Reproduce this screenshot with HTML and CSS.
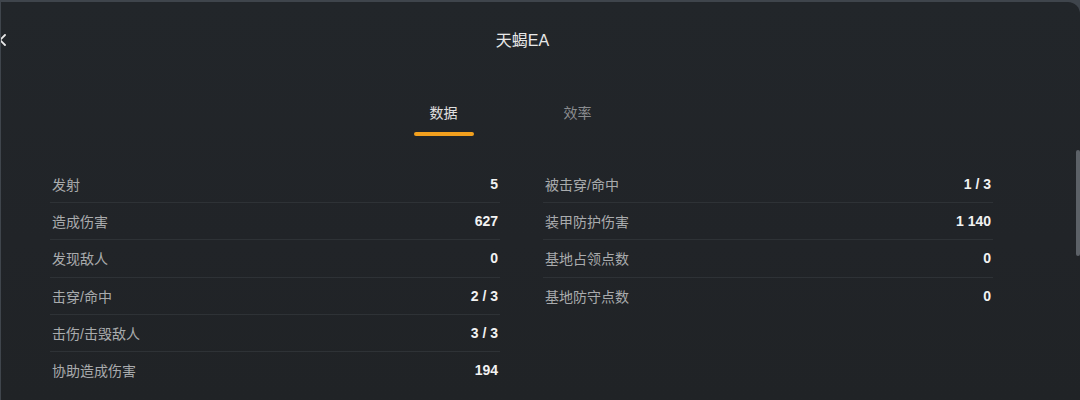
FILE: index.html
```html
<!DOCTYPE html>
<html lang="zh">
<head>
<meta charset="utf-8">
<link rel="stylesheet" href="styles.css">
</head>
<body>
<div class="panel">
  <div class="close">
    <svg width="14" height="14" viewBox="0 0 14 14"><path d="M2 2 L12 12 M12 2 L2 12" stroke="#e8e8e8" stroke-width="1.8" stroke-linecap="round" fill="none"/></svg>
  </div>
  <header class="header"><h1 class="title">天蝎EA</h1></header>
  <nav class="tabs">
    <div class="tab active">数据</div>
    <div class="tab">效率</div>
  </nav>
  <section class="stats">
    <div class="col">
      <div class="row"><span class="label">发射</span><span class="value">5</span></div>
      <div class="row"><span class="label">造成伤害</span><span class="value">627</span></div>
      <div class="row"><span class="label">发现敌人</span><span class="value">0</span></div>
      <div class="row"><span class="label">击穿/命中</span><span class="value">2 / 3</span></div>
      <div class="row"><span class="label">击伤/击毁敌人</span><span class="value">3 / 3</span></div>
      <div class="row last"><span class="label">协助造成伤害</span><span class="value">194</span></div>
    </div>
    <div class="col">
      <div class="row"><span class="label">被击穿/命中</span><span class="value">1 / 3</span></div>
      <div class="row"><span class="label">装甲防护伤害</span><span class="value">1 140</span></div>
      <div class="row"><span class="label">基地占领点数</span><span class="value">0</span></div>
      <div class="row last"><span class="label">基地防守点数</span><span class="value">0</span></div>
    </div>
  </section>
  <div class="scrollbar"></div>
</div>
</body>
</html>
```
FILE: styles.css
```css
html, body {
  margin: 0;
  padding: 0;
  width: 1080px;
  height: 400px;
  overflow: hidden;
  background: #3f454c;
}
.panel {
  position: relative;
  margin: 2px 0 0 1px;
  height: 398px;
  background: linear-gradient(180deg, #22262a 0%, #212428 60%, #202326 100%);
  border-top-right-radius: 12px;
  overflow: hidden;
  font-family: "Liberation Sans", "Noto Sans CJK SC", sans-serif;
}
.close {
  position: absolute;
  left: -8px;
  top: 31px;
  width: 14px;
  height: 14px;
}
.close svg { display: block; }
.header {
  height: 78px;
  display: flex;
  align-items: center;
  justify-content: center;
}
.title {
  margin: 0;
  font-size: 16px;
  font-weight: normal;
  color: #e8e8e8;
  line-height: 20px;
  padding-right: 36px;
}
.tabs {
  display: flex;
  justify-content: center;
  gap: 74px;
  height: 56px;
  padding-right: 60px;
}
.tab {
  width: 60px;
  text-align: center;
  font-size: 14px;
  color: #8a8c8f;
  line-height: 20px;
  padding-top: 23px;
  box-sizing: border-box;
  height: 56px;
  position: relative;
}
.tab.active { color: #e0e0e0; }
.tab.active::after {
  content: "";
  position: absolute;
  left: 0;
  right: 0;
  bottom: 0;
  height: 4px;
  border-radius: 2px;
  background: #f2a01e;
}
.stats {
  display: flex;
  gap: 43px;
  padding: 30px 0 0 49px;
}
.col {
  width: 450px;
  display: flex;
  flex-direction: column;
}
.row {
  height: 36.2px;
  border-bottom: 1px solid #2e3236;
  display: flex;
  align-items: center;
  justify-content: space-between;
  padding: 0 2px 0 2px;
}
.row.last { border-bottom-color: transparent; }
.label {
  font-size: 14px;
  color: #a9abad;
}
.value {
  font-size: 14px;
  font-weight: bold;
  color: #f2f2f2;
}
.scrollbar {
  position: absolute;
  right: 0;
  top: 148px;
  width: 4px;
  height: 106px;
  border-radius: 2px;
  background: #5c6167;
}
```
